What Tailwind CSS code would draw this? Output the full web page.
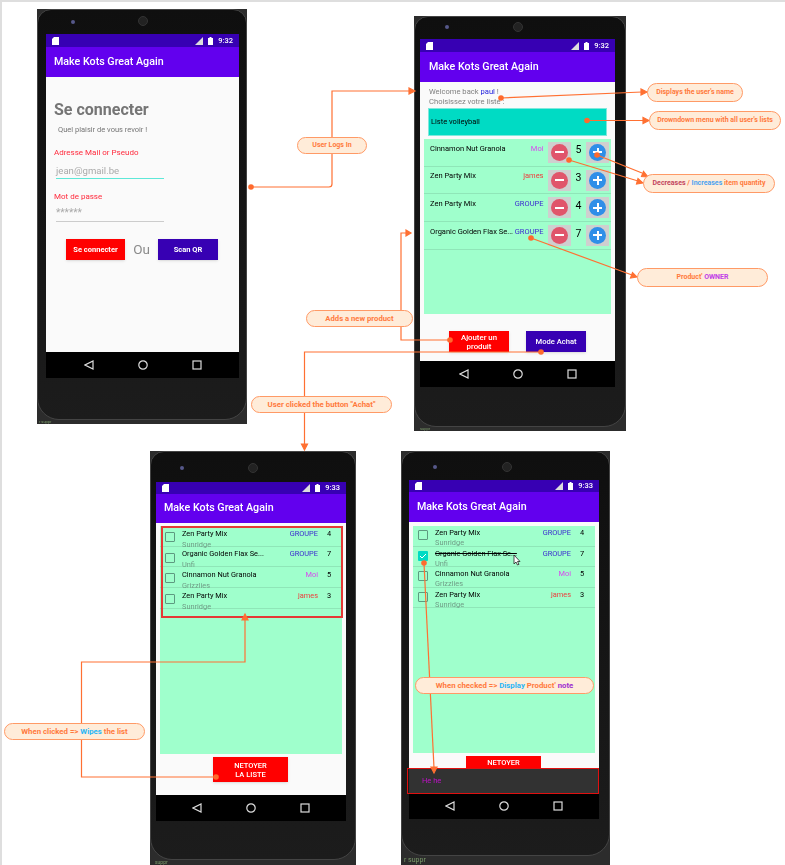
<!DOCTYPE html>
<html lang="en">
<head>
  <meta charset="UTF-8" />
  <title>Make Kots Great Again - flow</title>
  <script src="https://cdn.jsdelivr.net/npm/@tailwindcss/browser@4"></script>
</head>
<body class="bg-white font-['Roboto',sans-serif]">
<main class="relative w-[785px] h-[865px] overflow-hidden bg-white border-l-2 border-t-2 border-[#dedede] box-border">

  <!-- phone 1 : login -->
  <section class="absolute left-[35px] top-[7px] w-[210px] h-[415px] bg-[#2c2c2c] blur-[0.4px]">
    <div class="relative h-[411px] pt-[24px] pl-[8px] bg-linear-to-b from-[#0f0f0f] to-[#1c1c1c] rounded-t-[14px] rounded-b-[22px] border border-[#444]">
      <span class="absolute left-[33px] top-[10px] w-[4px] h-[4px] rounded-full bg-[#56588a]"></span>
      <span class="absolute left-[100px] top-[6px] w-[10px] h-[10px] rounded-full bg-[#222] border border-[#333]"></span>
      <div class="w-[193px]">
        <div class="h-[13px] bg-[#3700b3] flex items-center justify-between px-[6px] text-white text-[7.5px] font-medium">
          <svg width="7" height="8" viewBox="0 0 7 8"><path d="M2 0h5v8H0V2z" fill="#fff"/></svg>
          <div class="flex items-center gap-[5px]">
            <svg width="8" height="8" viewBox="0 0 8 8"><path d="M8 0v8H0z" fill="#ddd"/></svg>
            <svg width="5" height="8" viewBox="0 0 5 8"><path d="M1.500 0h2v1H5v7H0V1h1.500z" fill="#fff"/></svg>
            <span>9:32</span>
          </div>
        </div>
        <div class="h-[30px] bg-[#6200ee] flex items-center pl-[8px] text-white text-[10.700px] font-medium">Make Kots Great Again</div>
        <div class="h-[275px] bg-[#fafafa] pt-[23px]">
          <h1 class="pl-[8px] text-[16px] leading-[20px] font-bold text-[#757575]">Se connecter</h1>
          <p class="pl-[12px] mt-[4px] text-[7.500px] leading-[12px] text-[#757575]">Quel plaisir de vous revoir !</p>
          <p class="pl-[8px] mt-[11px] text-[8px] leading-[12px] text-[#ff2a3c]">Adresse Mail or Pseudo</p>
          <div class="ml-[10px] w-[108px] mt-[3px] h-[17px] pt-[1px] text-[9.600px] leading-[15px] text-[#aaa] border-b border-[#5ee8d8]">jean@gmail.be</div>
          <p class="pl-[8px] mt-[12px] text-[8px] leading-[12px] text-[#ff2a3c]">Mot de passe</p>
          <div class="ml-[10px] w-[108px] mt-[3px] h-[16px] text-[10px] leading-[14px] text-[#aaa] border-b border-[#ccc]">******</div>
          <div class="flex items-center mt-[17px] pl-[20px]">
            <div class="w-[59px] h-[21px] bg-[#ff0000] shadow-sm flex items-center justify-center text-white text-[7.500px] font-bold">Se connecter</div>
            <span class="w-[33px] text-center text-[13.500px] text-[#8a8a8a]">Ou</span>
            <div class="w-[60px] h-[21px] bg-[#3700b3] shadow-sm flex items-center justify-center text-white text-[7.500px] font-bold">Scan QR</div>
          </div>
        </div>
        <div class="h-[26px] bg-black flex items-center justify-center gap-[44px]">
          <svg width="10" height="10" viewBox="0 0 10 10"><path d="M9 1v8L1 5z" fill="none" stroke="#ddd" stroke-width="1.200"/></svg>
          <svg width="10" height="10" viewBox="0 0 10 10"><circle cx="5" cy="5" r="4.200" fill="none" stroke="#ddd" stroke-width="1.200"/></svg>
          <svg width="10" height="10" viewBox="0 0 10 10"><rect x="1" y="1" width="8" height="8" fill="none" stroke="#ddd" stroke-width="1.200"/></svg>
        </div>
      </div>
    </div>
    <p class="pl-[2px] text-[4px] leading-[4px] text-[#7a9a6a]">r suppr</p>
  </section>

  <!-- phone 2 : list -->
  <section class="absolute left-[412px] top-[14px] w-[212px] h-[415px] bg-[#2c2c2c] blur-[0.4px]">
    <div class="relative h-[411px] pt-[22px] pl-[5px] bg-linear-to-b from-[#0f0f0f] to-[#1c1c1c] rounded-t-[14px] rounded-b-[22px] border border-[#444]">
      <span class="absolute left-[30px] top-[8px] w-[4px] h-[4px] rounded-full bg-[#56588a]"></span>
      <span class="absolute left-[98px] top-[5px] w-[10px] h-[10px] rounded-full bg-[#222] border border-[#333]"></span>
      <div class="w-[195px]">
        <div class="h-[13px] bg-[#3700b3] flex items-center justify-between px-[6px] text-white text-[7.5px] font-medium">
          <svg width="7" height="8" viewBox="0 0 7 8"><path d="M2 0h5v8H0V2z" fill="#fff"/></svg>
          <div class="flex items-center gap-[5px]">
            <svg width="8" height="8" viewBox="0 0 8 8"><path d="M8 0v8H0z" fill="#ddd"/></svg>
            <svg width="5" height="8" viewBox="0 0 5 8"><path d="M1.500 0h2v1H5v7H0V1h1.500z" fill="#fff"/></svg>
            <span>9:32</span>
          </div>
        </div>
        <div class="h-[30px] bg-[#6200ee] flex items-center pl-[9px] text-white text-[10.700px] font-medium">Make Kots Great Again</div>
        <div class="h-[279px] bg-[#fafafa] pt-[5px]">
          <p class="pl-[9px] text-[7.600px] leading-[10px] text-[#808080]">Welcome back <span class="text-[#2222dd]">paul</span> !</p>
          <p class="pl-[9px] text-[7.600px] leading-[10px] text-[#808080]">Choisissez votre liste :</p>
          <div class="ml-[8px] w-[179px] h-[28px] mt-[1px] pl-[2px] flex items-center bg-[#00dbc4] border border-[#7fe8dc] text-[7.500px] text-black">Liste volleyball</div>
          <div class="ml-[4px] w-[187px] h-[175px] mt-[3px] bg-[#9fffcc]">
            <div class="h-[27.700px] flex items-center border-b border-[#8fe6b8] pl-[6px]">
              <span class="mb-[8px] w-[84px] whitespace-nowrap text-[7.500px] text-black">Cinnamon Nut Granola</span>
              <span class="mb-[8px] w-[29.500px] text-right text-[7.500px] text-[#d946ef]">Moi</span>
              <span class="ml-[4.500px] w-[23px] h-[21px] bg-[#cfcfcf] flex items-center justify-center"><span class="w-[17px] h-[17px] rounded-full bg-[#e0556b] flex items-center justify-center"><span class="w-[9px] h-[2px] bg-white"></span></span></span>
              <span class="mb-[4px] w-[15px] text-center text-[10.500px] text-black">5</span>
              <span class="w-[23px] h-[21px] bg-[#cfcfcf] flex items-center justify-center"><span class="relative w-[17px] h-[17px] rounded-full bg-[#2f8fe8] flex items-center justify-center"><span class="w-[9px] h-[2px] bg-white"></span><span class="absolute w-[2px] h-[9px] bg-white"></span></span></span>
            </div>
            <div class="h-[27.700px] flex items-center border-b border-[#8fe6b8] pl-[6px]">
              <span class="mb-[8px] w-[84px] whitespace-nowrap text-[7.500px] text-black">Zen Party Mix</span>
              <span class="mb-[8px] w-[29.500px] text-right text-[7.500px] text-[#ef3b3b]">james</span>
              <span class="ml-[4.500px] w-[23px] h-[21px] bg-[#cfcfcf] flex items-center justify-center"><span class="w-[17px] h-[17px] rounded-full bg-[#e0556b] flex items-center justify-center"><span class="w-[9px] h-[2px] bg-white"></span></span></span>
              <span class="mb-[4px] w-[15px] text-center text-[10.500px] text-black">3</span>
              <span class="w-[23px] h-[21px] bg-[#cfcfcf] flex items-center justify-center"><span class="relative w-[17px] h-[17px] rounded-full bg-[#2f8fe8] flex items-center justify-center"><span class="w-[9px] h-[2px] bg-white"></span><span class="absolute w-[2px] h-[9px] bg-white"></span></span></span>
            </div>
            <div class="h-[27.700px] flex items-center border-b border-[#8fe6b8] pl-[6px]">
              <span class="mb-[8px] w-[84px] whitespace-nowrap text-[7.500px] text-black">Zen Party Mix</span>
              <span class="mb-[8px] w-[29.500px] text-right text-[7.500px] text-[#3b2bd0]">GROUPE</span>
              <span class="ml-[4.500px] w-[23px] h-[21px] bg-[#cfcfcf] flex items-center justify-center"><span class="w-[17px] h-[17px] rounded-full bg-[#e0556b] flex items-center justify-center"><span class="w-[9px] h-[2px] bg-white"></span></span></span>
              <span class="mb-[4px] w-[15px] text-center text-[10.500px] text-black">4</span>
              <span class="w-[23px] h-[21px] bg-[#cfcfcf] flex items-center justify-center"><span class="relative w-[17px] h-[17px] rounded-full bg-[#2f8fe8] flex items-center justify-center"><span class="w-[9px] h-[2px] bg-white"></span><span class="absolute w-[2px] h-[9px] bg-white"></span></span></span>
            </div>
            <div class="h-[27.700px] flex items-center border-b border-[#8fe6b8] pl-[6px]">
              <span class="mb-[8px] w-[84px] whitespace-nowrap text-[7.500px] text-black">Organic Golden Flax Se...</span>
              <span class="mb-[8px] w-[29.500px] text-right text-[7.500px] text-[#3b2bd0]">GROUPE</span>
              <span class="ml-[4.500px] w-[23px] h-[21px] bg-[#cfcfcf] flex items-center justify-center"><span class="w-[17px] h-[17px] rounded-full bg-[#e0556b] flex items-center justify-center"><span class="w-[9px] h-[2px] bg-white"></span></span></span>
              <span class="mb-[4px] w-[15px] text-center text-[10.500px] text-black">7</span>
              <span class="w-[23px] h-[21px] bg-[#cfcfcf] flex items-center justify-center"><span class="relative w-[17px] h-[17px] rounded-full bg-[#2f8fe8] flex items-center justify-center"><span class="w-[9px] h-[2px] bg-white"></span><span class="absolute w-[2px] h-[9px] bg-white"></span></span></span>
            </div>
          </div>
          <div class="flex mt-[17px] pl-[29px] gap-[17px]">
            <div class="w-[60px] h-[21px] bg-[#ff0000] shadow-sm flex items-center justify-center text-center text-white text-[7.800px] leading-[9px] font-medium">Ajouter un produit</div>
            <div class="w-[60px] h-[21px] bg-[#3700b3] shadow-sm flex items-center justify-center text-white text-[7.600px] font-medium">Mode Achat</div>
          </div>
        </div>
        <div class="h-[26px] bg-black flex items-center justify-center gap-[44px]">
          <svg width="10" height="10" viewBox="0 0 10 10"><path d="M9 1v8L1 5z" fill="none" stroke="#ddd" stroke-width="1.200"/></svg>
          <svg width="10" height="10" viewBox="0 0 10 10"><circle cx="5" cy="5" r="4.200" fill="none" stroke="#ddd" stroke-width="1.200"/></svg>
          <svg width="10" height="10" viewBox="0 0 10 10"><rect x="1" y="1" width="8" height="8" fill="none" stroke="#ddd" stroke-width="1.200"/></svg>
        </div>
      </div>
    </div>
    <p class="pl-[6px] text-[4px] leading-[4px] text-[#7a9a6a]">suppr</p>
  </section>

  <!-- phone 3 : shopping mode -->
  <section class="absolute left-[148px] top-[449px] w-[206px] h-[414px] bg-[#2c2c2c] blur-[0.4px]">
    <div class="relative h-[409px] pt-[30px] pl-[5px] bg-linear-to-b from-[#0f0f0f] to-[#1c1c1c] rounded-t-[14px] rounded-b-[22px] border border-[#444]">
      <span class="absolute left-[29px] top-[14px] w-[4px] h-[4px] rounded-full bg-[#56588a]"></span>
      <span class="absolute left-[97px] top-[11px] w-[10px] h-[10px] rounded-full bg-[#222] border border-[#333]"></span>
      <div class="w-[190px]">
        <div class="h-[12px] bg-[#3700b3] flex items-center justify-between px-[6px] text-white text-[7.5px] font-medium">
          <svg width="7" height="8" viewBox="0 0 7 8"><path d="M2 0h5v8H0V2z" fill="#fff"/></svg>
          <div class="flex items-center gap-[5px]">
            <svg width="8" height="8" viewBox="0 0 8 8"><path d="M8 0v8H0z" fill="#ddd"/></svg>
            <svg width="5" height="8" viewBox="0 0 5 8"><path d="M1.500 0h2v1H5v7H0V1h1.500z" fill="#fff"/></svg>
            <span>9:33</span>
          </div>
        </div>
        <div class="h-[29px] bg-[#6200ee] flex items-center pl-[8px] text-white text-[10.700px] font-medium">Make Kots Great Again</div>
        <div class="h-[272px] bg-[#fafafa] pt-[3px]">
          <div class="ml-[4px] w-[182px] h-[228px] bg-[#9fffcc]">
            <div class="h-[20.700px] flex border-b border-[#8fe6b8] pl-[5px] pt-[1.500px] text-[7.400px]">
              <span class="mt-[4.500px] w-[10px] h-[10px] border-[1.5px] border-[#5d9a80] rounded-[1px]"></span>
              <div class="ml-[7px] w-[100px]"><p class="leading-[11px] text-black">Zen Party Mix</p><p class="leading-[11px] text-[#6f9d86]">Sunridge</p></div>
              <span class="w-[36px] text-right leading-[11px] text-[#3b2bd0]">GROUPE</span>
              <span class="w-[22px] text-center leading-[11px] text-black">4</span>
            </div>
            <div class="h-[20.700px] flex border-b border-[#8fe6b8] pl-[5px] pt-[1.500px] text-[7.400px]">
              <span class="mt-[4.500px] w-[10px] h-[10px] border-[1.5px] border-[#5d9a80] rounded-[1px]"></span>
              <div class="ml-[7px] w-[100px]"><p class="leading-[11px] text-black">Organic Golden Flax Se...</p><p class="leading-[11px] text-[#6f9d86]">Unfi</p></div>
              <span class="w-[36px] text-right leading-[11px] text-[#3b2bd0]">GROUPE</span>
              <span class="w-[22px] text-center leading-[11px] text-black">7</span>
            </div>
            <div class="h-[20.700px] flex border-b border-[#8fe6b8] pl-[5px] pt-[1.500px] text-[7.400px]">
              <span class="mt-[4.500px] w-[10px] h-[10px] border-[1.5px] border-[#5d9a80] rounded-[1px]"></span>
              <div class="ml-[7px] w-[100px]"><p class="leading-[11px] text-black">Cinnamon Nut Granola</p><p class="leading-[11px] text-[#6f9d86]">Grizzlies</p></div>
              <span class="w-[36px] text-right leading-[11px] text-[#d946ef]">Moi</span>
              <span class="w-[22px] text-center leading-[11px] text-black">5</span>
            </div>
            <div class="h-[20.700px] flex border-b border-[#8fe6b8] pl-[5px] pt-[1.500px] text-[7.400px]">
              <span class="mt-[4.500px] w-[10px] h-[10px] border-[1.5px] border-[#5d9a80] rounded-[1px]"></span>
              <div class="ml-[7px] w-[100px]"><p class="leading-[11px] text-black">Zen Party Mix</p><p class="leading-[11px] text-[#6f9d86]">Sunridge</p></div>
              <span class="w-[36px] text-right leading-[11px] text-[#ef3b3b]">james</span>
              <span class="w-[22px] text-center leading-[11px] text-black">3</span>
            </div>
          </div>
          <div class="ml-[57px] mt-[3px] w-[75px] h-[25px] bg-[#ff0000] shadow-sm flex items-center justify-center text-center text-white text-[7.500px] leading-[9px] font-medium">NETOYER<br>LA LISTE</div>
        </div>
        <div class="h-[26px] bg-black flex items-center justify-center gap-[44px]">
          <svg width="10" height="10" viewBox="0 0 10 10"><path d="M9 1v8L1 5z" fill="none" stroke="#ddd" stroke-width="1.200"/></svg>
          <svg width="10" height="10" viewBox="0 0 10 10"><circle cx="5" cy="5" r="4.200" fill="none" stroke="#ddd" stroke-width="1.200"/></svg>
          <svg width="10" height="10" viewBox="0 0 10 10"><rect x="1" y="1" width="8" height="8" fill="none" stroke="#ddd" stroke-width="1.200"/></svg>
        </div>
      </div>
    </div>
    <p class="pl-[5px] text-[5px] leading-[5px] text-[#7a9a6a]">suppr</p>
  </section>

  <!-- phone 4 : checked item with note -->
  <section class="absolute left-[399px] top-[449px] w-[209px] h-[414px] bg-[#2c2c2c] blur-[0.4px]">
    <div class="relative h-[405px] pt-[28px] pl-[7px] bg-linear-to-b from-[#0f0f0f] to-[#1c1c1c] rounded-t-[14px] rounded-b-[22px] border border-[#444]">
      <span class="absolute left-[31px] top-[13px] w-[4px] h-[4px] rounded-full bg-[#56588a]"></span>
      <span class="absolute left-[100px] top-[10px] w-[10px] h-[10px] rounded-full bg-[#222] border border-[#333]"></span>
      <div class="w-[190px]">
        <div class="h-[12px] bg-[#3700b3] flex items-center justify-between px-[6px] text-white text-[7.5px] font-medium">
          <svg width="7" height="8" viewBox="0 0 7 8"><path d="M2 0h5v8H0V2z" fill="#fff"/></svg>
          <div class="flex items-center gap-[5px]">
            <svg width="8" height="8" viewBox="0 0 8 8"><path d="M8 0v8H0z" fill="#ddd"/></svg>
            <svg width="5" height="8" viewBox="0 0 5 8"><path d="M1.500 0h2v1H5v7H0V1h1.500z" fill="#fff"/></svg>
            <span>9:33</span>
          </div>
        </div>
        <div class="h-[30px] bg-[#6200ee] flex items-center pl-[8px] text-white text-[10.700px] font-medium">Make Kots Great Again</div>
        <div class="h-[246px] bg-[#fafafa] pt-[4px] overflow-hidden">
          <div class="ml-[4px] w-[182px] h-[227px] bg-[#9fffcc]">
            <div class="h-[20.500px] flex border-b border-[#8fe6b8] pl-[5px] pt-[1px] text-[7.400px]">
              <span class="mt-[3px] w-[10px] h-[10px] border-[1.5px] border-[#5d9a80] rounded-[1px]"></span>
              <div class="ml-[7px] w-[100px]"><p class="leading-[11px] text-black">Zen Party Mix</p><p class="leading-[10px] text-[#6f9d86]">Sunridge</p></div>
              <span class="w-[36px] text-right leading-[11px] text-[#3b2bd0]">GROUPE</span>
              <span class="w-[22px] text-center leading-[11px] text-black">4</span>
            </div>
            <div class="h-[20.500px] flex border-b border-[#8fe6b8] pl-[5px] pt-[1px] text-[7.400px]">
              <span class="mt-[3px] w-[10px] h-[10px] bg-[#00dbc4] rounded-[1px] flex items-center justify-center"><svg width="8" height="8" viewBox="0 0 8 8"><path d="M1 4l2 2 4-4" fill="none" stroke="#fff" stroke-width="1"/></svg></span>
              <div class="ml-[7px] w-[100px]"><p class="leading-[11px] text-black line-through">Organic Golden Flax Se...</p><p class="leading-[10px] text-[#6f9d86]">Unfi</p></div>
              <span class="w-[36px] text-right leading-[11px] text-[#3b2bd0]">GROUPE</span>
              <span class="w-[22px] text-center leading-[11px] text-black">7</span>
            </div>
            <div class="h-[20.500px] flex border-b border-[#8fe6b8] pl-[5px] pt-[1px] text-[7.400px]">
              <span class="mt-[3px] w-[10px] h-[10px] border-[1.5px] border-[#5d9a80] rounded-[1px]"></span>
              <div class="ml-[7px] w-[100px]"><p class="leading-[11px] text-black">Cinnamon Nut Granola</p><p class="leading-[10px] text-[#6f9d86]">Grizzlies</p></div>
              <span class="w-[36px] text-right leading-[11px] text-[#d946ef]">Moi</span>
              <span class="w-[22px] text-center leading-[11px] text-black">5</span>
            </div>
            <div class="h-[20.500px] flex border-b border-[#8fe6b8] pl-[5px] pt-[1px] text-[7.400px]">
              <span class="mt-[3px] w-[10px] h-[10px] border-[1.5px] border-[#5d9a80] rounded-[1px]"></span>
              <div class="ml-[7px] w-[100px]"><p class="leading-[11px] text-black">Zen Party Mix</p><p class="leading-[10px] text-[#6f9d86]">Sunridge</p></div>
              <span class="w-[36px] text-right leading-[11px] text-[#ef3b3b]">james</span>
              <span class="w-[22px] text-center leading-[11px] text-black">3</span>
            </div>
          </div>
          <div class="ml-[57px] mt-[3px] w-[75px] h-[25px] bg-[#ff0000] flex justify-center pt-[2px] text-white text-[7.500px] leading-[9px] font-medium">NETOYER</div>
        </div>
        <div class="h-[25px] bg-[#323232] flex items-center pl-[13px] text-[7.500px] text-[#c010c8]">He he</div>
        <div class="h-[26px] bg-black flex items-center justify-center gap-[44px]">
          <svg width="10" height="10" viewBox="0 0 10 10"><path d="M9 1v8L1 5z" fill="none" stroke="#ddd" stroke-width="1.200"/></svg>
          <svg width="10" height="10" viewBox="0 0 10 10"><circle cx="5" cy="5" r="4.200" fill="none" stroke="#ddd" stroke-width="1.200"/></svg>
          <svg width="10" height="10" viewBox="0 0 10 10"><rect x="1" y="1" width="8" height="8" fill="none" stroke="#ddd" stroke-width="1.200"/></svg>
        </div>
      </div>
    </div>
    <p class="pl-[3px] text-[7px] leading-[8px] text-[#7a9a6a]">r suppr</p>
  </section>

  <!-- red highlight boxes -->
  <div class="absolute left-[159px] top-[524px] w-[182px] h-[92px] border-2 border-[#e53935]"></div>
  <div class="absolute left-[405px] top-[766px] w-[192px] h-[26px] border border-[#e01010]"></div>

  <!-- connectors, drawn in page coordinates shifted by the 2px border -->
  <svg class="absolute left-[-2px] top-[-2px]" width="785" height="865" viewBox="0 0 785 865" fill="none" stroke="#ff7032" stroke-width="1.200">
    <path d="M251 187H329q3 0 3-3V91H410"/><path d="M415 91l-6-3v6z" fill="#ff7032"/>
    <path d="M450 340H401V233H407"/><path d="M411 233l-5-3v6z" fill="#ff7032"/>
    <path d="M541 352H304.500V445"/><path d="M304.500 450l-3-6h6z" fill="#ff7032"/>
    <path d="M501 98L642 92"/><path d="M647 92l-6-3v6z" fill="#ff7032"/>
    <path d="M587 120.500H644"/><path d="M649 120.500l-6-3v6z" fill="#ff7032"/>
    <path d="M597 155L642 173"/><path d="M648 177l-6.500-.5 2-5z" fill="#ff7032"/>
    <path d="M569 160L638 181"/><path d="M643 183l-6.500 1 1.500-5.500z" fill="#ff7032"/>
    <path d="M531 238L632 275"/><path d="M637 277l-6.500 1 2-5.500z" fill="#ff7032"/>
    <path d="M245 620V662H81.500V777H216"/><path d="M245 614l-3 6h6z" fill="#ff7032"/>
    <path d="M424 563L434 768"/><path d="M434 773l-3-6h6z" fill="#ff7032"/>
    <g fill="#ff6a2d" stroke="none">
      <circle cx="251" cy="187" r="2.800"/><circle cx="450" cy="340" r="2.800"/><circle cx="541" cy="352" r="2.800"/>
      <circle cx="501" cy="98" r="2.800"/><circle cx="587" cy="120.500" r="2.800"/><circle cx="597" cy="155" r="2.800"/>
      <circle cx="569" cy="160" r="2.800"/><circle cx="531" cy="238" r="2.800"/><circle cx="216" cy="777" r="2.800"/>
      <circle cx="424" cy="563" r="2.800"/>
    </g>
  </svg>

  <!-- mouse pointer on phone 4 -->
  <svg class="absolute left-[511px] top-[552px]" width="8" height="12" viewBox="0 0 8 12"><path d="M1 1v9l2-2 1.500 3 1.500-.7L4.500 7.500H7z" fill="#fff" stroke="#222" stroke-width="0.800"/></svg>

  <!-- callouts -->
  <div class="absolute left-[295px] top-[135px] w-[70px] h-[17px] rounded-full bg-[#ffecd9] border border-[#ff9a66] flex items-center justify-center text-[7px] font-bold text-[#ff7a3d] whitespace-nowrap">User Logs In</div>
  <div class="absolute left-[304px] top-[308px] w-[107px] h-[17px] rounded-full bg-[#ffecd9] border border-[#ff9a66] flex items-center justify-center text-[7.700px] font-bold text-[#ff7a3d] whitespace-nowrap">Adds a new product</div>
  <div class="absolute left-[249px] top-[394px] w-[141px] h-[17px] rounded-full bg-[#ffecd9] border border-[#ff9a66] flex items-center justify-center text-[7.800px] font-bold text-[#ff7a3d] whitespace-nowrap">User clicked the button "Achat"</div>
  <div class="absolute left-[645px] top-[81px] w-[96px] h-[19px] rounded-full bg-[#ffecd9] border border-[#ff9a66] flex items-center justify-center text-[7px] font-bold text-[#ff7a3d] whitespace-nowrap">Displays the user's name</div>
  <div class="absolute left-[647px] top-[109px] w-[132px] h-[19px] rounded-full bg-[#ffecd9] border border-[#ff9a66] flex items-center justify-center text-[7px] font-bold text-[#ff7a3d] whitespace-nowrap">Drowndown menu with all user's lists</div>
  <div class="absolute left-[641px] top-[172px] w-[132px] h-[19px] rounded-full bg-[#ffecd9] border border-[#ff9a66] flex items-center justify-center text-[7px] font-bold text-[#ff7a3d] whitespace-nowrap"><span class="text-[#c2455f]">Decreases</span>&nbsp;/&nbsp;<span class="text-[#4da3f0]">Increases</span>&nbsp;item quantity</div>
  <div class="absolute left-[635px] top-[266px] w-[131px] h-[19px] rounded-full bg-[#ffecd9] border border-[#ff9a66] flex items-center justify-center text-[7px] font-bold text-[#ff7a3d] whitespace-nowrap">Product'&nbsp;<span class="text-[#c040e8]">OWNER</span></div>
  <div class="absolute left-[2px] top-[721px] w-[141px] h-[17px] rounded-full bg-[#ffecd9] border border-[#ff9a66] flex items-center justify-center text-[7.800px] font-bold text-[#ff7a3d] whitespace-nowrap">When clicked =>&nbsp;<span class="text-[#29b6f6]">Wipes</span>&nbsp;the list</div>
  <div class="absolute left-[413px] top-[675px] w-[179px] h-[17px] rounded-full bg-[#ffecd9] border border-[#ff9a66] flex items-center justify-center text-[7.800px] font-bold text-[#ff7a3d] whitespace-nowrap">When checked =>&nbsp;<span class="text-[#29b6f6]">Display</span>&nbsp;Product'&nbsp;<span class="text-[#a030d0]">note</span></div>
</main>
</body>
</html>
